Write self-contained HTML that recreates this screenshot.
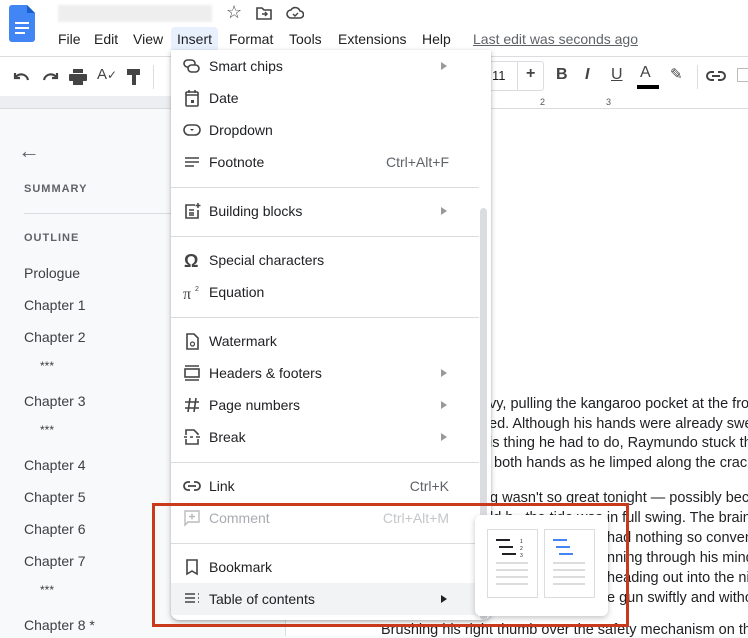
<!DOCTYPE html>
<html><head><meta charset="utf-8">
<style>
*{box-sizing:border-box;margin:0;padding:0}
body{width:748px;height:636px;overflow:hidden;position:relative;background:#f8f9fa;font-family:"Liberation Sans",Arial,sans-serif;color:#202124}
.abs{position:absolute}
.menu-bar span{position:absolute;top:31px;font-size:14px;color:#202124}
.tb{position:absolute;top:56px;left:0;width:748px;height:40px;background:#fff;border-top:1px solid #dadce0}
.ruler{position:absolute;top:96px;left:0;width:748px;height:13px;background:#eceef1;border-bottom:1px solid #dadce0}
.side{position:absolute;left:24px;color:#3c4043;font-size:14px}
.hd{font-size:11px;letter-spacing:1px;color:#5f6368;font-weight:bold}
.page{position:absolute;left:285px;top:109px;width:463px;height:527px;background:#fff;border-left:1px solid #dadce0}
.doc{position:absolute;left:492px;font-size:14.5px;color:#202124;white-space:nowrap;font-family:"Liberation Sans",Arial,sans-serif}
.menu{position:absolute;left:171px;top:50px;width:320px;height:570px;background:#fff;border-radius:0 0 8px 8px;box-shadow:0 2px 6px rgba(60,64,67,.3),0 1px 2px rgba(60,64,67,.2)}
.it{position:absolute;left:0;width:308px;height:32px;font-size:14px;color:#202124}
.it .t{position:absolute;left:38px;top:8px}
.it .k{position:absolute;right:30px;top:8px;color:#5f6368}
.it .ar{position:absolute;right:32px;top:12px;width:0;height:0;border-left:6px solid #999;border-top:4px solid transparent;border-bottom:4px solid transparent}
.it svg{position:absolute;left:12px;top:7px}
.sep{position:absolute;left:0;width:308px;height:1px;background:#dadce0}
</style></head><body>
<div class="abs" style="left:0;top:0;width:748px;height:56px;background:#fff"></div>
<svg class="abs" style="left:9px;top:5px" width="26" height="37" viewBox="0 0 26 37"><path d="M3 0h15l8 8v26a3 3 0 0 1-3 3H3a3 3 0 0 1-3-3V3a3 3 0 0 1 3-3z" fill="#4285f4"/><path d="M18 0l8 8h-8z" fill="#1a5fc9"/><rect x="6" y="17" width="14" height="2" fill="#fff"/><rect x="6" y="22" width="14" height="2" fill="#fff"/><rect x="6" y="27" width="10" height="2" fill="#fff"/></svg>
<div class="abs" style="left:58px;top:5px;width:154px;height:17px;background:#eeeeee;filter:blur(1px)"></div>
<div class="abs" style="left:226px;top:2px;font-size:18px;color:#444">☆</div>
<svg class="abs" style="left:256px;top:6px" width="16" height="14"><path d="M1 2h5l2 2h7v9H1z" fill="none" stroke="#444" stroke-width="1.6"/><path d="M6 8h5M9 6l2 2-2 2" fill="none" stroke="#444" stroke-width="1.4"/></svg>
<svg class="abs" style="left:286px;top:6px" width="18" height="14"><path d="M5 12a4 4 0 0 1 0-8 5 5 0 0 1 9 1 3.5 3.5 0 0 1 0 7z" fill="none" stroke="#444" stroke-width="1.6"/><path d="M7 8l2 2 3-3" fill="none" stroke="#444" stroke-width="1.4"/></svg>
<div class="menu-bar">
<span style="left:58px">File</span><span style="left:94px">Edit</span><span style="left:133px">View</span>
<span style="left:171px;top:27px;padding:4px 6px;background:#e8f0fe;border-radius:4px 4px 0 0">Insert</span>
<span style="left:229px">Format</span><span style="left:289px">Tools</span><span style="left:338px">Extensions</span><span style="left:422px">Help</span>
<span style="left:473px;color:#5f6368;text-decoration:underline">Last edit was seconds ago</span>
</div>
<div class="tb">
<svg class="abs" style="left:13px;top:13px" width="48" height="14"><path d="M2 3v5h5M2 8a7 7 0 0 1 13 2" fill="none" stroke="#444" stroke-width="2.2"/><path d="M44 3v5h-5M44 8a7 7 0 0 0-13 2" fill="none" stroke="#444" stroke-width="2.2"/></svg>
<svg class="abs" style="left:69px;top:12px" width="18" height="16"><rect x="4" y="0" width="10" height="4" fill="#444"/><rect x="0" y="5" width="18" height="7" rx="1" fill="#444"/><rect x="4" y="10" width="10" height="6" fill="#444"/></svg>
<div class="abs" style="left:97px;top:9px;font-size:15px;color:#444">A<span style="font-size:12px">✓</span></div>
<svg class="abs" style="left:127px;top:12px" width="14" height="16"><rect x="0" y="0" width="13" height="6" fill="#444"/><rect x="5" y="6" width="4" height="10" fill="#444"/></svg>
<div class="abs" style="left:153px;top:8px;width:1px;height:24px;background:#dadce0"></div>
<div class="abs" style="left:486px;top:4px;width:58px;height:30px;border:1px solid #dadce0;border-radius:3px"></div>
<div class="abs" style="left:517px;top:4px;width:1px;height:30px;background:#dadce0"></div>
<div class="abs" style="left:492px;top:11px;font-size:13px;color:#202124">11</div>
<div class="abs" style="left:526px;top:8px;font-size:16px;font-weight:bold;color:#444">+</div>
<div class="abs" style="left:556px;top:9px;font-size:16px;font-weight:bold;color:#444">B</div>
<div class="abs" style="left:585px;top:9px;font-size:16px;font-style:italic;font-weight:bold;color:#444">I</div>
<div class="abs" style="left:611px;top:9px;font-size:16px;text-decoration:underline;color:#444">U</div>
<div class="abs" style="left:640px;top:7px;font-size:16px;color:#444">A</div>
<div class="abs" style="left:637px;top:28px;width:22px;height:4px;background:#000"></div>
<div class="abs" style="left:670px;top:8px;font-size:15px;color:#444">✎</div>
<div class="abs" style="left:697px;top:8px;width:1px;height:24px;background:#dadce0"></div>
<svg class="abs" style="left:706px;top:14px" width="20" height="10"><path d="M8 1H5a4 4 0 0 0 0 8h3M12 1h3a4 4 0 0 1 0 8h-3M6 5h8" fill="none" stroke="#444" stroke-width="2"/></svg>
<div class="abs" style="left:737px;top:11px;width:14px;height:14px;border:1px solid #bbb"></div>
</div>
<div class="ruler"></div>
<div class="abs" style="left:491px;top:96px;width:257px;height:13px;background:#fff;border-bottom:1px solid #dadce0"></div>
<div class="abs" style="left:540px;top:97px;font-size:9px;color:#555">2</div>
<div class="abs" style="left:606px;top:97px;font-size:9px;color:#555">3</div>
<div class="side" style="top:138px;font-size:22px;color:#5f6368;left:18px">←</div>
<div class="side hd" style="top:183px">SUMMARY</div>
<div class="abs" style="left:24px;top:213px;width:150px;height:1px;background:#dadce0"></div>
<div class="side hd" style="top:232px">OUTLINE</div>
<div class="side" style="top:265px">Prologue</div>
<div class="side" style="top:297px">Chapter 1</div>
<div class="side" style="top:329px">Chapter 2</div>
<div class="side" style="top:359px;left:40px;font-size:12px">***</div>
<div class="side" style="top:393px">Chapter 3</div>
<div class="side" style="top:423px;left:40px;font-size:12px">***</div>
<div class="side" style="top:457px">Chapter 4</div>
<div class="side" style="top:489px">Chapter 5</div>
<div class="side" style="top:521px">Chapter 6</div>
<div class="side" style="top:553px">Chapter 7</div>
<div class="side" style="top:583px;left:40px;font-size:12px">***</div>
<div class="side" style="top:617px">Chapter 8 *</div>
<div class="page"></div>
<div class="doc" style="top:396px;left:489px">vy, pulling the kangaroo pocket at the front</div>
<div class="doc" style="top:416px;left:489px">ed. Although his hands were already sweating</div>
<div class="doc" style="top:435px;left:489px">is thing he had to do, Raymundo stuck them</div>
<div class="doc" style="top:455px;left:494px">both hands as he limped along the crack</div>
<div class="doc" style="top:490px;left:490px">g wasn't so great tonight — possibly because</div>
<div class="doc" style="top:510px;left:490px">ld b.. the tide was in full swing. The brain</div>
<div class="doc" style="top:530px;left:607px">had nothing so convenient</div>
<div class="doc" style="top:550px;left:607px">nning through his mind</div>
<div class="doc" style="top:570px;left:607px">heading out into the night</div>
<div class="doc" style="top:590px;left:607px">e gun swiftly and without</div>
<div class="doc" style="top:622px;left:381px">Brushing his right thumb over the safety mechanism on the</div>
<div class="menu">
<div class="abs" style="left:309px;top:158px;width:7px;height:412px;background:#dadce0;border-radius:4px"></div>
<div class="it" style="top:0"><svg width="18" height="18"><rect x="1" y="3" width="11" height="7" rx="3.5" fill="none" stroke="#444" stroke-width="1.6"/><rect x="5" y="8" width="11" height="7" rx="3.5" fill="#fff" stroke="#444" stroke-width="1.6"/></svg><span class="t">Smart chips</span><span class="ar"></span></div>
<div class="it" style="top:32px"><svg width="18" height="18"><rect x="3" y="3" width="12" height="14" rx="1" fill="none" stroke="#444" stroke-width="1.6"/><path d="M3 6h12M6 1v3M12 1v3" stroke="#444" stroke-width="1.6"/><rect x="8" y="11" width="3" height="3" fill="#444"/></svg><span class="t">Date</span></div>
<div class="it" style="top:64px"><svg width="18" height="18"><rect x="1" y="4" width="16" height="10" rx="5" fill="none" stroke="#444" stroke-width="1.6"/><path d="M7 8h4l-2 2z" fill="#444"/></svg><span class="t">Dropdown</span></div>
<div class="it" style="top:96px"><svg width="18" height="18"><path d="M2 5h14M2 9h14M2 13h9" stroke="#444" stroke-width="1.6"/></svg><span class="t">Footnote</span><span class="k">Ctrl+Alt+F</span></div>
<div class="sep" style="top:137px"></div>
<div class="it" style="top:145px"><svg width="18" height="18"><path d="M12 3H3v13h12V8" fill="none" stroke="#444" stroke-width="1.6"/><path d="M6 8h5M6 11h5M6 13h5M15 1v5M12.5 3.5h5" stroke="#444" stroke-width="1.5"/></svg><span class="t">Building blocks</span><span class="ar"></span></div>
<div class="sep" style="top:186px"></div>
<div class="it" style="top:194px"><svg width="18" height="18"><text x="1" y="16" font-size="18" font-weight="bold" fill="#444" font-family="Liberation Sans">Ω</text></svg><span class="t">Special characters</span></div>
<div class="it" style="top:226px"><svg width="18" height="18"><text x="0" y="16" font-size="16" fill="#444" font-family="Liberation Serif">π</text><text x="12" y="8" font-size="7" fill="#444">2</text></svg><span class="t">Equation</span></div>
<div class="sep" style="top:267px"></div>
<div class="it" style="top:275px"><svg width="18" height="18"><path d="M4 2h7l4 4v11H4z" fill="none" stroke="#444" stroke-width="1.6"/><circle cx="9.5" cy="12" r="2" fill="none" stroke="#444" stroke-width="1.2"/></svg><span class="t">Watermark</span></div>
<div class="it" style="top:307px"><svg width="18" height="18"><rect x="2" y="5" width="14" height="8" fill="none" stroke="#444" stroke-width="1.6"/><path d="M2 2h14M2 16h14" stroke="#444" stroke-width="1.6"/></svg><span class="t">Headers &amp; footers</span><span class="ar"></span></div>
<div class="it" style="top:339px"><svg width="18" height="18"><path d="M7 2L5 16M13 2l-2 14M2 6h14M2 12h14" stroke="#444" stroke-width="1.6"/></svg><span class="t">Page numbers</span><span class="ar"></span></div>
<div class="it" style="top:371px"><svg width="18" height="18"><path d="M3 7V2h8l4 4v1M3 11v5h12v-5M1 9h3M7 9h3M13 9h4" fill="none" stroke="#444" stroke-width="1.6"/></svg><span class="t">Break</span><span class="ar"></span></div>
<div class="sep" style="top:412px"></div>
<div class="it" style="top:420px"><svg width="18" height="18"><path d="M7 5H5a4 4 0 0 0 0 8h2M11 5h2a4 4 0 0 1 0 8h-2M5 9h8" fill="none" stroke="#444" stroke-width="1.8"/></svg><span class="t">Link</span><span class="k">Ctrl+K</span></div>
<div class="it" style="top:452px;color:#aaa"><svg width="18" height="18"><path d="M2 2h14v11H5l-3 3z" fill="none" stroke="#bbb" stroke-width="1.4"/><path d="M9 4.5v6M6 7.5h6" stroke="#bbb" stroke-width="1.4"/></svg><span class="t" style="color:#a8abb0">Comment</span><span class="k" style="color:#c4c6c9">Ctrl+Alt+M</span></div>
<div class="sep" style="top:493px"></div>
<div class="it" style="top:501px"><svg width="18" height="18"><path d="M4 2h10v14l-5-3-5 3z" fill="none" stroke="#444" stroke-width="1.6"/></svg><span class="t">Bookmark</span></div>
<div class="it" style="top:533px;background:#f1f3f4"><svg width="18" height="18"><path d="M2 4h10M2 8h10M2 12h10" stroke="#444" stroke-width="1.6"/><path d="M15 4h1M15 8h1M15 12h1" stroke="#444" stroke-width="1.6"/></svg><span class="t">Table of contents</span><span class="ar" style="border-left-color:#202124"></span></div>
</div>
<div class="abs" style="left:475px;top:515px;width:133px;height:101px;background:#fff;border-radius:6px;box-shadow:0 2px 6px rgba(60,64,67,.3)"></div>
<svg class="abs" style="left:487px;top:529px" width="110" height="70">
<rect x="0.5" y="0.5" width="50" height="68" fill="#fff" stroke="#dadce0"/>
<rect x="57.5" y="0.5" width="50" height="68" fill="#fff" stroke="#dadce0"/>
<path d="M9 11h14M12 18h14M15 25h14" stroke="#202124" stroke-width="2"/>
<text x="33" y="14" font-size="5" fill="#202124">1</text><text x="33" y="21" font-size="5" fill="#202124">2</text><text x="33" y="28" font-size="5" fill="#202124">3</text>
<path d="M9 34h32M9 41h32M9 48h32M9 55h32" stroke="#d0d0d0" stroke-width="1.5"/>
<path d="M66 11h14M69 18h14M72 25h14" stroke="#4285f4" stroke-width="2"/>
<path d="M66 34h32M66 41h32M66 48h32M66 55h32" stroke="#d0d0d0" stroke-width="1.5"/>
</svg>
<div class="abs" style="left:152px;top:503px;width:477px;height:124px;border:3px solid #c9391c"></div>
</body></html>
